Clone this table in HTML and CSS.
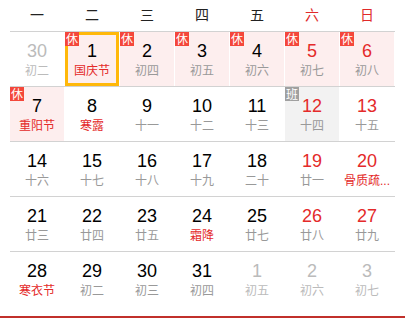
FILE: index.html
```html
<!DOCTYPE html>
<html lang="zh-CN">
<head>
<meta charset="utf-8">
<link rel="stylesheet" href="styles.css">
</head>
<body>
<div class="cal">
  <div class="week">
    <span>一</span><span>二</span><span>三</span><span>四</span><span>五</span><span class="we">六</span><span class="we">日</span>
  </div>
  <div class="row">
    <div class="day other"><b>30</b><i>初二</i></div>
    <div class="day rest today"><em class="tag">休</em><b>1</b><i class="fest">国庆节</i></div>
    <div class="day rest"><em class="tag">休</em><b>2</b><i>初四</i></div>
    <div class="day rest"><em class="tag">休</em><b>3</b><i>初五</i></div>
    <div class="day rest"><em class="tag">休</em><b>4</b><i>初六</i></div>
    <div class="day rest red"><em class="tag">休</em><b>5</b><i>初七</i></div>
    <div class="day rest red"><em class="tag">休</em><b>6</b><i>初八</i></div>
  </div>
  <div class="row">
    <div class="day rest"><em class="tag">休</em><b>7</b><i class="fest">重阳节</i></div>
    <div class="day"><b>8</b><i class="fest">寒露</i></div>
    <div class="day"><b>9</b><i>十一</i></div>
    <div class="day"><b>10</b><i>十二</i></div>
    <div class="day"><b>11</b><i>十三</i></div>
    <div class="day work red"><em class="tag ban">班</em><b>12</b><i>十四</i></div>
    <div class="day red"><b>13</b><i>十五</i></div>
  </div>
  <div class="row">
    <div class="day"><b>14</b><i>十六</i></div>
    <div class="day"><b>15</b><i>十七</i></div>
    <div class="day"><b>16</b><i>十八</i></div>
    <div class="day"><b>17</b><i>十九</i></div>
    <div class="day"><b>18</b><i>二十</i></div>
    <div class="day red"><b>19</b><i>廿一</i></div>
    <div class="day red"><b>20</b><i class="fest">骨质疏...</i></div>
  </div>
  <div class="row">
    <div class="day"><b>21</b><i>廿三</i></div>
    <div class="day"><b>22</b><i>廿四</i></div>
    <div class="day"><b>23</b><i>廿五</i></div>
    <div class="day"><b>24</b><i class="fest">霜降</i></div>
    <div class="day"><b>25</b><i>廿七</i></div>
    <div class="day red"><b>26</b><i>廿八</i></div>
    <div class="day red"><b>27</b><i>廿九</i></div>
  </div>
  <div class="row last">
    <div class="day"><b>28</b><i class="fest">寒衣节</i></div>
    <div class="day"><b>29</b><i>初二</i></div>
    <div class="day"><b>30</b><i>初三</i></div>
    <div class="day"><b>31</b><i>初四</i></div>
    <div class="day other"><b>1</b><i>初五</i></div>
    <div class="day other"><b>2</b><i>初六</i></div>
    <div class="day other"><b>3</b><i>初七</i></div>
  </div>
</div>
<div class="bottom"></div>
</body>
</html>
```
FILE: styles.css
```css
html, body {
  margin: 0;
  padding: 0;
  background: #fff;
}
body {
  width: 405px;
  height: 318px;
  overflow: hidden;
  font-family: "Liberation Sans", "Noto Sans CJK SC", sans-serif;
  color: #000;
}
.cal {
  padding: 0 10px;
  height: 316px;
}
.week {
  display: grid;
  grid-template-columns: repeat(7, 55px);
  height: 28px;
  padding-bottom: 3px;
  align-items: center;
  border-bottom: 1px solid #d2d2d2;
  font-family: "Noto Sans CJK SC", sans-serif;
  font-size: 14px;
  color: #222;
}
.week span {
  text-align: center;
  padding-right: 1px;
}
.week .we {
  color: #e02a2a;
}
.row {
  display: grid;
  grid-template-columns: repeat(7, 55px);
  height: 54px;
  border-bottom: 1px solid #d2d2d2;
}
.row.last {
  border-bottom: none;
}
.day {
  position: relative;
  margin-right: 1px;
  display: flex;
  flex-direction: column;
  align-items: center;
  box-sizing: border-box;
}
.day b {
  font-weight: normal;
  font-size: 18px;
  line-height: 20px;
  margin-top: 9px;
  color: #000;
}
.day i {
  font-style: normal;
  font-family: "Liberation Sans", "Noto Sans CJK SC", sans-serif;
  font-size: 12px;
  line-height: 16px;
  margin-top: 2px;
  color: #999;
  white-space: nowrap;
}
.day i.fest {
  color: #e42a2a;
}
.day.red b {
  color: #e42a2a;
}
.day.other b,
.day.other i {
  color: #bbb;
}
.day.rest {
  background: #fdeeee;
}
.day.work {
  background: #f2f2f2;
}
.day.today {
  border: 3px solid #ffb80a;
}
.day.today b {
  margin-top: 6px;
}
.tag {
  position: absolute;
  top: 0;
  left: 0;
  width: 14px;
  height: 14px;
  background: #f4473a;
  color: #fff;
  font-style: normal;
  font-family: "Noto Sans CJK SC", sans-serif;
  font-size: 12px;
  line-height: 14px;
  text-align: center;
}
.day.today .tag {
  top: -3px;
  left: -3px;
}
.tag.ban {
  background: #a0a0a0;
}
.bottom {
  height: 2px;
  background: #c1302b;
}
```
